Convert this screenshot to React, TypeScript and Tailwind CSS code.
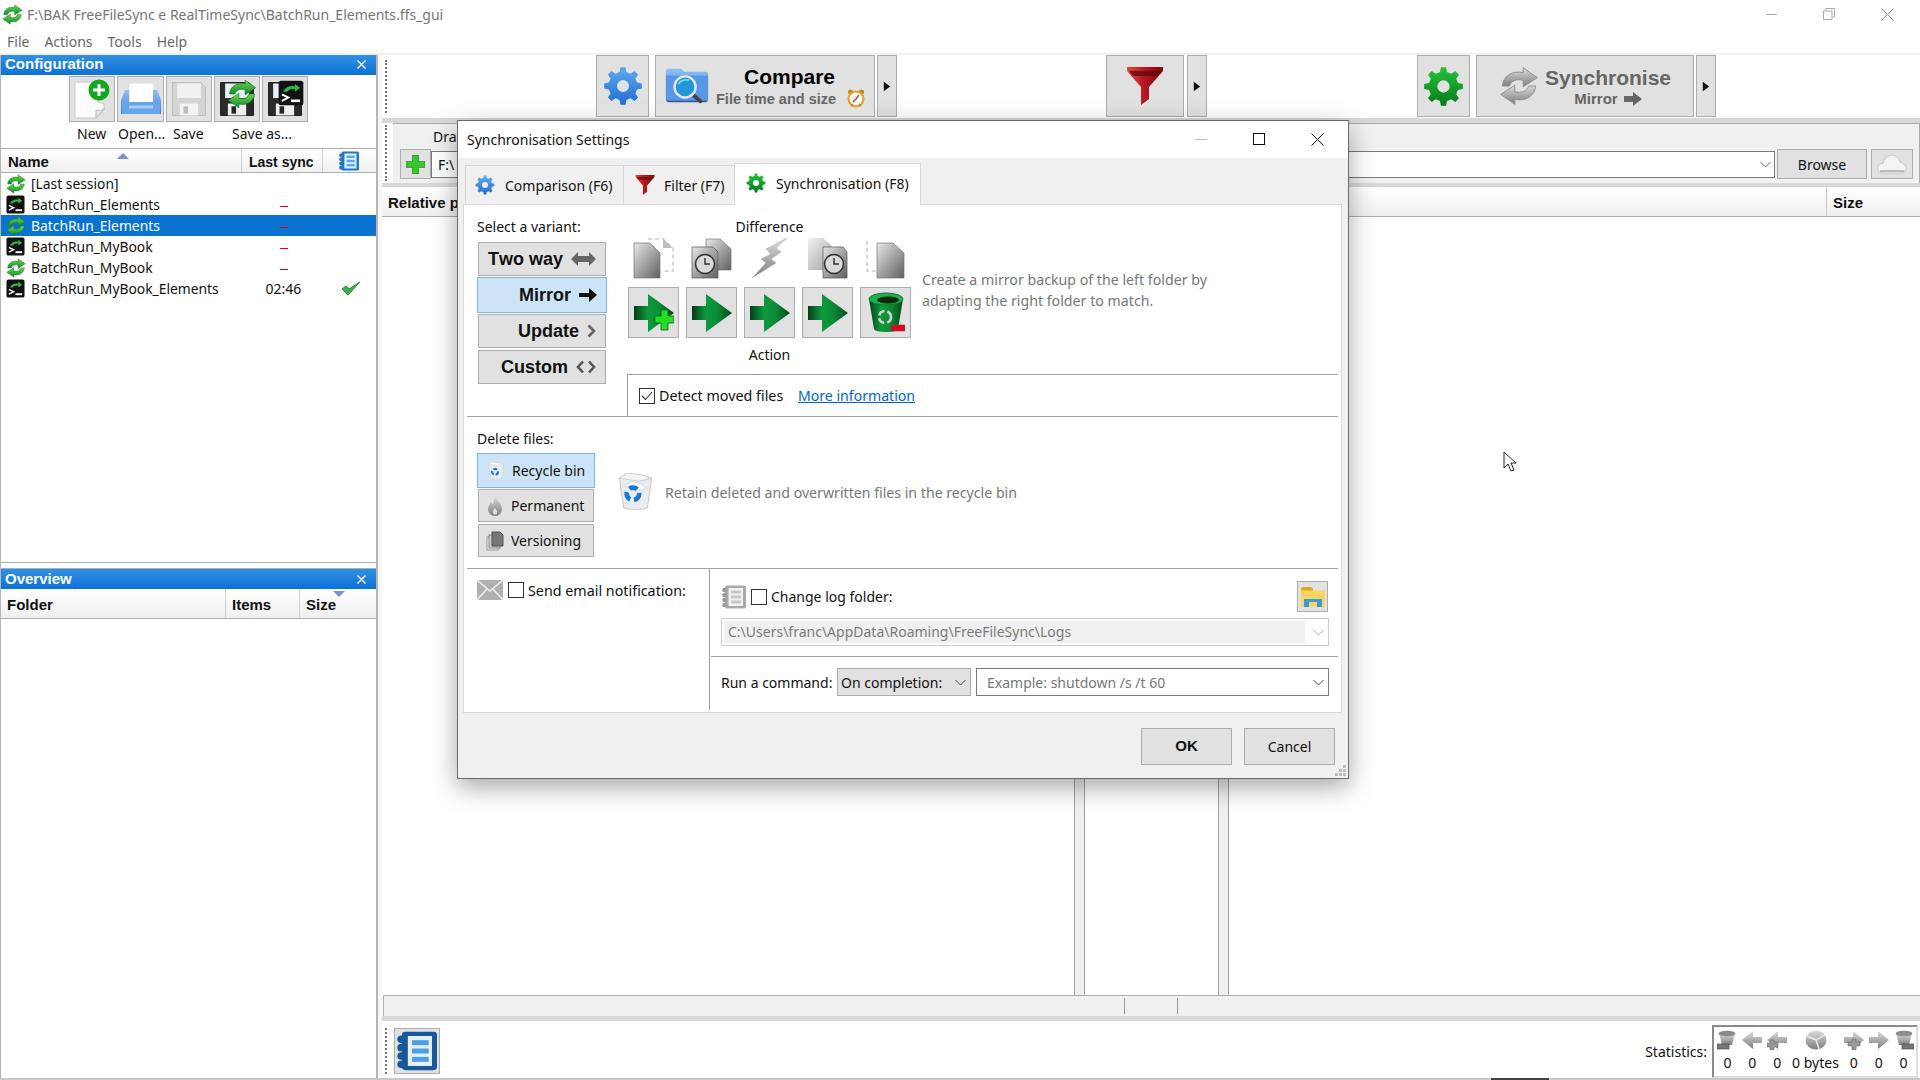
import React from "react";

const gearD = (cx: number, cy: number, ro: number, ri: number, hole: number, n = 8) => {
  let d = "";
  for (let i = 0; i < n; i++) {
    const s = (Math.PI * 2) / n;
    const a = i * s;
    const pts = [
      [ri, a - s * 0.30],
      [ro, a - s * 0.17],
      [ro, a + s * 0.17],
      [ri, a + s * 0.30],
    ];
    pts.forEach(([r, t], j) => {
      d += `${i === 0 && j === 0 ? "M" : "L"}${(cx + r * Math.cos(t)).toFixed(2)} ${(cy + r * Math.sin(t)).toFixed(2)} `;
    });
  }
  d += `Z M${cx + hole} ${cy} A${hole} ${hole} 0 1 0 ${cx - hole} ${cy} A${hole} ${hole} 0 1 0 ${cx + hole} ${cy} Z`;
  return d;
};
const GEAR = gearD(20, 20, 19, 14.5, 6);

const Defs = () => (
  <svg className="absolute w-0 h-0">
    <defs>
      <linearGradient id="gBlue" x1="0" y1="0" x2="0" y2="1"><stop offset="0" stopColor="#5fa8f0" /><stop offset="1" stopColor="#1e6fd0" /></linearGradient>
      <linearGradient id="gGreenG" x1="0" y1="0" x2="0" y2="1"><stop offset="0" stopColor="#27c23a" /><stop offset="1" stopColor="#057a1a" /></linearGradient>
      <linearGradient id="gRed" x1="0" y1="0" x2="1" y2="0"><stop offset="0" stopColor="#e74545" /><stop offset="0.5" stopColor="#b5161c" /><stop offset="1" stopColor="#7a0a10" /></linearGradient>
      <linearGradient id="gArrow" x1="0" y1="0" x2="1" y2="0"><stop offset="0" stopColor="#063d18" /><stop offset="0.35" stopColor="#0c9a3c" /><stop offset="0.65" stopColor="#0a8a35" /><stop offset="1" stopColor="#04481b" /></linearGradient>
      <linearGradient id="gDoc" x1="0" y1="0" x2="1" y2="1"><stop offset="0" stopColor="#e8e8e8" /><stop offset="1" stopColor="#5f5f5f" /></linearGradient>
      <linearGradient id="gSync" x1="0" y1="0" x2="0" y2="1"><stop offset="0" stopColor="#6fd83c" /><stop offset="1" stopColor="#0b8a3a" /></linearGradient>
      <linearGradient id="gGray" x1="0" y1="0" x2="0" y2="1"><stop offset="0" stopColor="#dcdcdc" /><stop offset="1" stopColor="#7d7d7d" /></linearGradient>
      <linearGradient id="gFolder" x1="0" y1="0" x2="0" y2="1"><stop offset="0" stopColor="#8fc0f5" /><stop offset="1" stopColor="#3f7fd6" /></linearGradient>
    </defs>
  </svg>
);

const SyncArrows = ({ fill = "url(#gSync)", size = 20, stroke = "#0a6e30" }: { fill?: string; size?: number; stroke?: string }) => (
  <svg className="shrink-0" width={size} height={size} viewBox="0 0 24 24">
    <path d="M2 12C2.5 6 8 2.5 14.5 4L14.5 1L23 7L14.5 12.5L14.5 8.6C10.5 7.5 7.3 9 6.2 12Z" fill={fill} stroke={stroke} strokeWidth="0.5" />
    <path d="M22 12C21.5 18 16 21.5 9.5 20L9.5 23L1 17L9.5 11.5L9.5 15.4C13.5 16.5 16.7 15 17.8 12Z" fill={fill} stroke={stroke} strokeWidth="0.5" />
  </svg>
);

const TermIcon = ({ size = 20 }: { size?: number }) => (
  <svg className="shrink-0" width={size} height={size} viewBox="0 0 20 20">
    <rect x="0.5" y="0.5" width="19" height="19" rx="2" fill="#111" />
    <path d="M4 9C6 5 10 4 13 5L13 3L17 6L13 9L13 7C10 6.5 8 7.5 7 9Z" fill="#2fb84a" />
    <path d="M3 11L8 13.5L3 16" fill="none" stroke="#fff" strokeWidth="1.5" />
    <path d="M10 16H17" stroke="#fff" strokeWidth="2" />
  </svg>
);

const Floppy = ({ dark = false }: { dark?: boolean }) => (
  <>
    <path d="M5 5H36L41 10V41H5Z" fill={dark ? "#2a2a2a" : "#d4d4d4"} stroke={dark ? "#111" : "#bbb"} />
    <rect x="10" y="6" width="26" height="16" fill={dark ? "#e8eef5" : "#f1f1f1"} />
    <rect x="13" y="28" width="20" height="13" fill={dark ? "#eee" : "#f3f3f3"} />
    <rect x="17" y="31" width="5" height="8" fill={dark ? "#222" : "#bbb"} />
  </>
);

const NewIcon = () => (
  <svg width="40" height="42" viewBox="0 0 40 42">
    <path d="M3 4H26V24L32 26V32L24 40H3Z" fill="#fdfdfd" stroke="#c9c9c9" />
    <path d="M33 30L24 40V32C28 33 31 32 33 30Z" fill="#e6e6e6" stroke="#bbb" />
    <circle cx="27" cy="12" r="10.5" fill="#12a71f" />
    <path d="M27 6V18M21 12H33" stroke="#fff" strokeWidth="3" />
  </svg>
);
const OpenIcon = () => (
  <svg width="42" height="42" viewBox="0 0 42 42">
    <rect x="9" y="5" width="25" height="22" fill="#fff" stroke="#ddd" />
    <path d="M5 12H9V26H33V12H37L41 22V36H1V22Z" fill="url(#gFolder)" />
    <path d="M2 24H40V36H2Z" fill="#68a6ec" />
    <path d="M9 29H33" stroke="#a6cdf5" strokeWidth="3" />
  </svg>
);

const CompareIcon = () => (
  <svg className="shrink-0" width="46" height="42" viewBox="0 0 48 42">
    <path d="M2 6Q2 3 5 3H18L21 6H43Q46 6 46 9V36H2Z" fill="url(#gFolder)" />
    <path d="M2 10H46V36H2Z" fill="#5b96e6" />
    <path d="M2 36H46L44 38H4Z" fill="#2d5fa8" />
    <path d="M28 28L38 37" stroke="#444" strokeWidth="4" strokeLinecap="round" />
    <circle cx="22" cy="22" r="11" fill="#1f9ad6" stroke="#e8e8e8" strokeWidth="2.5" />
    <path d="M15 19C17 15 22 14 26 15" stroke="#7fd0f5" strokeWidth="2" fill="none" />
  </svg>
);
const AlarmIcon = () => (
  <svg width="18" height="20" viewBox="0 0 18 20">
    <circle cx="3.5" cy="4" r="2.5" fill="#b98a2a" /><circle cx="14.5" cy="4" r="2.5" fill="#b98a2a" />
    <circle cx="9" cy="11" r="7.5" fill="#fff" stroke="#eda11c" strokeWidth="2" />
    <path d="M9 11L12 7M9 11L6 14" stroke="#d8382c" strokeWidth="1.3" />
    <path d="M4 18L6 16M14 18L12 16" stroke="#b98a2a" strokeWidth="1.5" />
  </svg>
);
const Funnel = ({ size = 38 }: { size?: number }) => (
  <svg className="shrink-0" width={size} height={size} viewBox="0 0 38 38">
    <path d="M1 0H37V4L23 20V32L15 38V20L1 4Z" fill="url(#gRed)" />
    <path d="M3 4H35L31 9H7Z" fill="#5a0a0e" opacity="0.75" />
  </svg>
);
const Gear = ({ fill, size }: { fill: string; size: number }) => (
  <svg className="shrink-0" width={size} height={size} viewBox="0 0 40 40"><path d={GEAR} fill={fill} fillRule="evenodd" /></svg>
);
const RightArrow = ({ w = 10, h = 12, c = "#111" }: { w?: number; h?: number; c?: string }) => (
  <svg width={w} height={h} viewBox="0 0 10 12"><path d="M1 0L9 6L1 12Z" fill={c} /></svg>
);
const Chevron = ({ c = "#444" }: { c?: string }) => (
  <svg className="shrink-0" width="11" height="7" viewBox="0 0 11 7"><path d="M0.5 1L5.5 6L10.5 1" fill="none" stroke={c} strokeWidth="1" /></svg>
);

const GreenArrow = () => (
  <svg width="40" height="38" viewBox="0 0 40 38">
    <path d="M0 12H14V0L40 19L14 38V26H0Z" fill="url(#gArrow)" />
  </svg>
);
const Clock = ({ cx, cy }: { cx: number; cy: number }) => (
  <g>
    <circle cx={cx} cy={cy} r="9.5" fill="#d9d9d9" stroke="#333" strokeWidth="1.6" />
    <path d={`M${cx} ${cy - 6}V${cy}H${cx + 5}`} fill="none" stroke="#333" strokeWidth="1.5" />
  </g>
);
const DiffLeftOnly = () => (
  <svg width="42" height="42" viewBox="0 0 42 42">
    <path d="M15 1H30L40 10V33H28" fill="none" stroke="#ccc" strokeWidth="1.6" strokeDasharray="4 3" />
    <path d="M30 1L40 10H30Z" fill="#bdbdbd" />
    <path d="M1 5H17L27 15V40H1Z" fill="url(#gDoc)" stroke="#777" strokeWidth="0.7" />
  </svg>
);
const DiffLeftNew = () => (
  <svg width="42" height="42" viewBox="0 0 42 42">
    <path d="M15 1H29L40 11V32H15Z" fill="url(#gDoc)" stroke="#777" strokeWidth="0.7" />
    <path d="M1 9H22L27 14V40H1Z" fill="url(#gDoc)" stroke="#555" strokeWidth="0.7" />
    <Clock cx={14} cy={26} />
  </svg>
);
const DiffBolt = () => (
  <svg width="36" height="40" viewBox="0 0 36 40">
    <path d="M35 0L14 11L19 16L9 21L14 25L0 40L24 25L19 21L29 14L24 10Z" fill="url(#gGray)" stroke="#aaa" strokeWidth="0.5" />
  </svg>
);
const DiffRightNew = () => (
  <svg width="42" height="42" viewBox="0 0 42 42">
    <path d="M1 0H16L27 10V32H1Z" fill="url(#gDoc)" opacity="0.6" />
    <path d="M16 9H36L40 14V40H16Z" fill="url(#gDoc)" stroke="#555" strokeWidth="0.7" />
    <Clock cx={27} cy={26} />
  </svg>
);
const DiffRightOnly = () => (
  <svg width="42" height="42" viewBox="0 0 42 42">
    <path d="M2 3V33H12" fill="none" stroke="#ccc" strokeWidth="1.6" strokeDasharray="4 3" />
    <path d="M12 5H28L39 15V40H12Z" fill="url(#gDoc)" stroke="#777" strokeWidth="0.7" />
  </svg>
);
const GreenBin = () => (
  <svg width="38" height="42" viewBox="0 0 38 42">
    <path d="M2 7L7 37Q8 40 19 40Q30 40 31 37L36 7Z" fill="url(#gArrow)" />
    <ellipse cx="19" cy="7" rx="17" ry="6" fill="#22b04a" stroke="#0a7a30" />
    <ellipse cx="21" cy="8" rx="11" ry="3.5" fill="#0a2a12" />
    <circle cx="18" cy="25" r="6" fill="none" stroke="#cfcfcf" strokeWidth="2.6" strokeDasharray="7 3" />
    <rect x="24" y="33" width="14" height="6" fill="#e8001a" stroke="#555" strokeWidth="0.6" />
  </svg>
);
const PlusArrow = () => (
  <svg width="40" height="38" viewBox="0 0 40 38">
    <path d="M0 12H14V0L40 19L14 38V26H0Z" fill="url(#gArrow)" />
    <path d="M27 16H34V22H40V29H34V36H27V29H21V22H27Z" fill="#22e01f" stroke="#0a5a12" strokeWidth="0.8" />
  </svg>
);
const Bin = ({ size = 16 }: { size?: number }) => (
  <svg className="shrink-0" width={size} height={size * 1.1} viewBox="0 0 32 36">
    <path d="M1 5L5 33Q6 35 16 35Q26 35 28 33L32 5Z" fill="#e9edf0" stroke="#c9c9c9" />
    <path d="M1 5L8 0L24 2L32 5L20 8Z" fill="#f5f5f5" stroke="#cfcfcf" />
    <path d="M6 12L13 8L24 11L27 15L17 18Z" fill="#f8f8f8" stroke="#dedede" />
    <circle cx="14" cy="20" r="6" fill="none" stroke="#1379d6" strokeWidth="4.5" strokeDasharray="8 4" />
  </svg>
);
const Flame = () => (
  <svg className="shrink-0" width="16" height="20" viewBox="0 0 16 20">
    <path d="M8 0C9 4 15 7 15 13C15 17 12 20 8 20C4 20 1 17 1 13C1 10 3 8 4 6C5 8 6 8 6 8C7 5 7 3 8 0Z" fill="url(#gGray)" />
    <path d="M8 12C9 14 11 15 10 17C9 19 7 19 6 17C5 15 7 14 8 12Z" fill="#ddd" />
  </svg>
);
const Stack = () => (
  <svg className="shrink-0" width="18" height="20" viewBox="0 0 18 20">
    <rect x="1" y="6" width="11" height="13" fill="#eee" stroke="#999" />
    <rect x="3" y="4" width="11" height="13" fill="#ccc" stroke="#888" />
    <path d="M6 1H14L17 4V15H6Z" fill="#777" stroke="#555" />
  </svg>
);
const Envelope = () => (
  <svg className="shrink-0" width="26" height="20" viewBox="0 0 26 20">
    <rect width="26" height="20" fill="#b0b0b0" />
    <path d="M0 0L13 11L26 0M0 20L10 9M26 20L16 9" stroke="#eee" strokeWidth="1.6" fill="none" />
  </svg>
);
const Notebook = ({ size = 24, main = "#a9a9a9", inner = "#f0f0f0", bar = "#c8c8c8", dot = "#999" }: { size?: number; main?: string; inner?: string; bar?: string; dot?: string }) => (
  <svg className="shrink-0" width={size} height={size} viewBox="0 0 24 24">
    <rect x="3" y="0.5" width="21" height="23" rx="2" fill={main} />
    <rect x="6.5" y="3" width="14.5" height="18" fill={inner} />
    <rect x="9" y="5.5" width="10" height="3" fill={bar} /><rect x="9" y="10.5" width="10" height="3" fill={bar} /><rect x="9" y="15.5" width="10" height="3" fill={bar} />
    <circle cx="2.5" cy="5" r="2.3" fill={dot} /><circle cx="2.5" cy="10" r="2.3" fill={dot} /><circle cx="2.5" cy="15" r="2.3" fill={dot} /><circle cx="2.5" cy="20" r="2.3" fill={dot} />
  </svg>
);
const WinFolder = () => (
  <svg width="24" height="20" viewBox="0 0 24 20">
    <path d="M0 2Q0 0 2 0H10L12 2V5H0Z" fill="#e0a522" />
    <rect y="3.5" width="24" height="16.5" fill="#fcd561" />
    <path d="M3 20V12H21V20H16V15H8V20Z" fill="#3d97dc" />
  </svg>
);
const Cloud = () => (
  <svg width="28" height="22" viewBox="0 0 28 22">
    <path d="M5 20Q0 20 0 15Q0 11 5 10Q6 4 13 2Q20 2 22 9Q28 11 28 16Q27 20 23 20Z" fill="#f4f4f4" stroke="#c8c8c8" />
    <path d="M2 18H26" stroke="#bbb" strokeWidth="2" />
  </svg>
);
const Grip = () => (
  <div className="w-[3px] h-full border-l-2 border-dotted border-[#777]" />
);

const StatBin = ({ flip = false }: { flip?: boolean }) => (
  <svg width="20" height="20" viewBox="0 0 20 20">
    <path d="M2 3L5 15H15L18 3Z" fill="url(#gGray)" />
    <ellipse cx="10" cy="3.5" rx="8.5" ry="2.8" fill="#8a8a8a" />
    <rect x={flip ? 8 : 0} y="14" width="12" height="5" fill="#777" stroke="#444" strokeWidth="0.6" />
  </svg>
);
const StatArrow = ({ left = false, plus = false }: { left?: boolean; plus?: boolean }) => (
  <svg width="20" height="20" viewBox="0 0 20 20">
    <path transform={left ? "translate(20 0) scale(-1 1)" : undefined} d="M0 7H9V1L20 10L9 19V13H0Z" fill="url(#gGray)" />
    {plus && <path d={left ? "M3 10H7V13H11V17H7V20H3V17H0V13H3Z" : "M8 9H12V12H16V16H12V20H8V16H4V12H8Z"} fill="#9a9a9a" stroke="#555" strokeWidth="0.5" />}
  </svg>
);
const StatPie = () => (
  <svg width="22" height="20" viewBox="0 0 22 20">
    <ellipse cx="11" cy="10" rx="10.5" ry="9.5" fill="url(#gGray)" />
    <path d="M11 10L2 6M11 10L20 5M11 10L14 19" stroke="#eee" strokeWidth="1.4" />
  </svg>
);

const btn = "bg-[#e1e1e1] border border-[#adadad] flex items-center justify-center";
const sans = "[font-family:'Liberation_Sans',Arial,sans-serif]";

const rows = [
  { t: "sync", n: "[Last session]", s: "", sel: false },
  { t: "term", n: "BatchRun_Elements", s: "-", sel: false },
  { t: "sync", n: "BatchRun_Elements", s: "-", sel: true },
  { t: "term", n: "BatchRun_MyBook", s: "-", sel: false },
  { t: "sync", n: "BatchRun_MyBook", s: "-", sel: false },
  { t: "term", n: "BatchRun_MyBook_Elements", s: "02:46", sel: false },
];

const PanelHead = ({ title, cls }: { title: string; cls: string }) => (
  <div className={`h-[20px] shrink-0 bg-gradient-to-b from-[#2f90e2] to-[#0a72d6] flex items-center justify-between pl-[4px] pr-[10px] text-white text-[15px] font-bold ${cls} ${sans}`}>
    <span>{title}</span>
    <svg width="9" height="9" viewBox="0 0 9 9"><path d="M0.5 0.5L8.5 8.5M8.5 0.5L0.5 8.5" stroke="#fff" strokeWidth="1.3" /></svg>
  </div>
);

const CheckBox = ({ on = false }: { on?: boolean }) => (
  <span className="w-[16px] h-[16px] shrink-0 border border-[#333] bg-white flex items-center justify-center">
    {on && <svg width="12" height="10" viewBox="0 0 12 10"><path d="M1 5L4.5 8.5L11 1" fill="none" stroke="#333" strokeWidth="1.1" /></svg>}
  </span>
);

const Variant = ({ label, on, icon, cls }: { label: string; on?: boolean; icon: React.ReactNode; cls: string }) => (
  <div className={`${cls} flex items-center justify-end pr-[9px] gap-[8px] border text-[18px] font-bold text-[#111] [font-kerning:none] ${sans} ${on ? "bg-[#cce4f7] border-[#7cb5ec]" : "bg-[#e1e1e1] border-[#adadad]"}`}>
    <span>{label}</span>{icon}
  </div>
);

export default function App() {
  return (
    <div className="relative w-[1920px] h-[1080px] overflow-hidden bg-white flex flex-col text-[14px] text-[#111] [font-family:'Noto_Sans',sans-serif]">
      <Defs />
      {/* Title bar */}
      <div className="h-[28px] shrink-0 flex items-center pl-[2px] text-[#767676]">
        <SyncArrows size={21} />
        <span className="ml-[4px]">F:\BAK FreeFileSync e RealTimeSync\BatchRun_Elements.ffs_gui</span>
        <div className="ml-auto flex items-center h-full pr-[4px]">
          <div className="w-[58px] flex justify-center"><svg width="11" height="1" viewBox="0 0 11 1"><path d="M0 .5H11" stroke="#aaa" /></svg></div>
          <div className="w-[58px] flex justify-center"><svg width="12" height="12" viewBox="0 0 12 12"><path d="M3 2.5V.5H11.5V9H9.5M.5 3H9V11.5H.5Z" fill="none" stroke="#aaa" /></svg></div>
          <div className="w-[58px] flex justify-center"><svg width="13" height="13" viewBox="0 0 13 13"><path d="M.5 .5L12.5 12.5M12.5 .5L.5 12.5" stroke="#888" /></svg></div>
        </div>
      </div>
      {/* Menu */}
      <div className="h-[25px] shrink-0 flex items-center pl-[7px] pt-[2px] gap-[15px] text-[#666]">
        <span>File</span><span>Actions</span><span>Tools</span><span>Help</span>
      </div>
      <div className="h-[2px] shrink-0 bg-[#f0f0f0]" />

      {/* Main */}
      <div className="flex flex-1 min-h-0">
        {/* Left pane */}
        <div className="w-[378px] shrink-0 flex flex-col border-l border-r-2 border-[#b5b5b5]">
          <PanelHead title="Configuration" cls="pb-[2px]" />
          <div className="h-[74px] shrink-0 border-b border-[#adadad] flex flex-col">
            <div className="flex pl-[68px] gap-[2px] pt-[1px] h-[47px]">
              <div className={`${btn} w-[46px] h-[46px]`}><NewIcon /></div>
              <div className={`${btn} w-[47px] h-[46px]`}><OpenIcon /></div>
              <div className={`${btn} w-[46px] h-[46px]`}><svg width="42" height="42" viewBox="0 0 46 46"><Floppy /></svg></div>
              <div className={`${btn} w-[46px] h-[46px] relative`}>
                <svg width="42" height="42" viewBox="0 0 46 46"><Floppy dark /></svg>
                <div className="absolute right-[2px] top-[2px]"><SyncArrows size={30} /></div>
              </div>
              <div className={`${btn} w-[46px] h-[46px] relative`}>
                <svg width="42" height="42" viewBox="0 0 46 46"><Floppy dark /></svg>
                <div className="absolute right-[3px] top-[3px]"><TermIcon size={26} /></div>
              </div>
            </div>
            <div className="flex h-[22px] items-center text-[14px] text-[#111]">
              <span className="ml-[76px] w-[41px]">New</span>
              <span className="w-[55px]">Open...</span>
              <span className="w-[59px]">Save</span>
              <span>Save as...</span>
            </div>
          </div>
          <div className={`h-[24px] shrink-0 flex border-b border-[#adadad] bg-gradient-to-b from-[#ffffff] to-[#f0f0f0] text-[15px] font-bold ${sans} relative`}>
            <div className="w-[241px] border-r border-[#d0d0d0] pl-[7px] pt-[3px] flex items-center">Name</div>
            <div className="w-[81px] border-r border-[#d0d0d0] pl-[7px] pt-[3px] flex items-center text-[14px] whitespace-nowrap">Last sync</div>
            <div className="flex-1 flex items-center pl-[16px]"><Notebook size={20} main="#1f79c9" bar="#5da9ea" dot="#1f79c9" inner="#e8f2fb" /></div>
            <svg className="absolute left-[116px] top-[4px]" width="12" height="6" viewBox="0 0 12 6"><path d="M6 0L12 6H0Z" fill="#7f8fd6" /></svg>
          </div>
          <div className="h-[390px] shrink-0 border-b border-[#adadad]">
            {rows.map((r, i) => (
              <div key={i} className={`h-[21px] flex items-center ${r.sel ? "bg-[#0a72d0] text-white" : ""}`}>
                <div className="w-[30px] pl-[5px] flex items-center">{r.t === "sync" ? <SyncArrows size={20} /> : <TermIcon size={19} />}</div>
                <div className="w-[212px] whitespace-nowrap text-[13.85px] pt-[1px]">{r.n}</div>
                <div className="w-[81px] text-center">
                  {r.s === "-" ? <span className="inline-block w-[8px] h-[1.5px] bg-[#e00000] align-middle" /> : <span>{r.s}</span>}
                </div>
                {r.s === "02:46" && (
                  <svg className="ml-[17px]" width="20" height="17" viewBox="0 0 20 17"><path d="M1 9L7 15L19 2L8 9L5 6Z" fill="#3cb04a" stroke="#2a8a3a" strokeWidth="1" /></svg>
                )}
              </div>
            ))}
          </div>
          <div className="h-[5px] shrink-0" />
          <div className="border-t border-[#adadad]"><PanelHead title="Overview" cls="pb-[0px]" /></div>
          <div className={`h-[30px] shrink-0 flex border-b border-[#adadad] bg-gradient-to-b from-[#ffffff] to-[#f0f0f0] text-[15px] font-bold ${sans} relative`}>
            <div className="w-[225px] border-r border-[#d0d0d0] pl-[6px] pt-[4px] flex items-center">Folder</div>
            <div className="w-[74px] border-r border-[#d0d0d0] pl-[6px] pt-[4px] flex items-center">Items</div>
            <div className="flex-1 pl-[6px] pt-[4px] flex items-center">Size</div>
            <svg className="absolute left-[332px] top-[2px]" width="12" height="6" viewBox="0 0 12 6"><path d="M0 0H12L6 6Z" fill="#7f8fd6" /></svg>
          </div>
          <div className="flex-1" />
        </div>
        <div className="w-[4px] shrink-0 bg-[#f6f6f6]" />

        {/* Right pane */}
        <div className="flex-1 min-w-0 flex flex-col">
          <div className="h-[63px] shrink-0 flex items-start">
            <div className="w-[214px] h-[53px] mt-[5px] pl-[3px]"><Grip /></div>
            <div className={`${btn} w-[53px] h-[62px] bg-gradient-to-b from-[#e1e1e1] from-80% to-[#f0f0f0]`}><Gear fill="url(#gBlue)" size={40} /></div>
            <div className={`${btn} w-[220px] h-[62px] ml-[6px] bg-gradient-to-b from-[#e1e1e1] from-80% to-[#f0f0f0] justify-start pl-[8px] relative`}>
              <CompareIcon />
              <div className={`ml-[6px] flex flex-col items-center ${sans} font-bold leading-none`}>
                <span className="text-[21px] text-black pl-[27px]">Compare</span>
                <span className="text-[14.5px] text-[#666] mt-[5px] whitespace-nowrap">File time and size</span>
              </div>
              <div className="absolute right-[9px] bottom-[8px]"><AlarmIcon /></div>
            </div>
            <div className={`${btn} w-[20px] h-[62px] ml-[2px]`}><RightArrow w={8} h={13} /></div>
            <div className={`${btn} w-[78px] h-[62px] ml-[209px]`}><Funnel size={38} /></div>
            <div className={`${btn} w-[20px] h-[62px] ml-[3px]`}><RightArrow w={8} h={13} /></div>
            <div className={`${btn} w-[53px] h-[62px] ml-[210px]`}><Gear fill="url(#gGreenG)" size={41} /></div>
            <div className={`${btn} w-[218px] h-[62px] ml-[6px] justify-start pl-[22px]`}>
              <SyncArrows size={40} fill="url(#gGray)" stroke="#888" />
              <div className={`ml-[6px] mt-[1px] flex flex-col items-center ${sans} font-bold leading-none text-[#666]`}>
                <span className="text-[21px]">Synchronise</span>
                <span className="text-[15px] mt-[3px] flex items-center gap-[6px]">Mirror
                  <svg width="18" height="14" viewBox="0 0 18 14"><path d="M0 4H9V0L18 7L9 14V10H0Z" fill="#666" /></svg>
                </span>
              </div>
            </div>
            <div className={`${btn} w-[20px] h-[62px] ml-[2px]`}><RightArrow w={8} h={13} /></div>
          </div>
          <div className="h-[5px] shrink-0 bg-[#d8d8d8]" />
          {/* Folder row */}
          <div className="h-[60px] shrink-0 flex">
            <div className="w-[11px] pl-[3px] py-[2px]"><Grip /></div>
            <div className="flex-1 bg-[#f0f0f0] border-t border-r border-[#adadad] flex flex-col pl-[7px]">
              <div className="h-[25px] pl-[33px] flex items-center">Dra</div>
              <div className="flex items-center">
                <div className={`${btn} w-[31px] h-[30px]`}>
                  <svg width="19" height="19" viewBox="0 0 19 19"><path d="M6.5 0H12.5V6.5H19V12.5H12.5V19H6.5V12.5H0V6.5H6.5Z" fill="#3ac42e" stroke="#16801a" strokeWidth="0.6" /></svg>
                </div>
                <div className="w-[1344px] h-[27px] bg-white border border-[#7a7a7a] flex items-center pl-[6px] pr-[3px] justify-between">
                  <span>F:\</span><Chevron c="#666" />
                </div>
                <div className={`${btn} w-[90px] h-[30px] ml-[2px]`}>Browse</div>
                <div className={`${btn} w-[42px] h-[30px] ml-[4px]`}><Cloud /></div>
              </div>
            </div>
          </div>
          <div className="h-[4px] shrink-0 bg-[#d8d8d8]" />
          <div className={`h-[30px] shrink-0 flex border-b border-[#adadad] bg-gradient-to-b from-[#ffffff] to-[#f0f0f0] text-[15px] font-bold ${sans}`}>
            <div className="w-[1444px] pl-[6px] pt-[3px] flex items-center">Relative p</div>
            <div className="flex-1 border-l border-[#c8c8c8] pl-[6px] pt-[3px] flex items-center">Size</div>
          </div>
          {/* Grid */}
          <div className="flex-1 min-h-0 flex">
            <div className="w-[692px]" />
            <div className="w-[11px] border-x border-[#a0a0a0] bg-[#f0f0f0]" />
            <div className="w-[133px]" />
            <div className="w-[11px] border-x border-[#a0a0a0] bg-[#f0f0f0]" />
          </div>
          {/* Status */}
          <div className="h-[21px] shrink-0 ml-[1px] bg-[#f0f0f0] border-t border-l border-[#adadad] flex py-[2px]">
            <div className="w-[740px]" />
            <div className="w-[54px] border-x border-[#999]" />
          </div>
          <div className="h-[5px] shrink-0 bg-[#d8d8d8]" />
          {/* Bottom toolbar */}
          <div className="h-[57px] shrink-0 flex items-start">
            <div className="w-[12px] h-[46px] mt-[7px] pl-[3px]"><Grip /></div>
            <div className={`${btn} w-[46px] h-[46px] mt-[7px]`}><Notebook size={40} main="#17599a" inner="#e8eef5" bar="#49a0e8" dot="#17599a" /></div>
            <div className="ml-auto flex items-center h-full pr-[2px]">
              <span className="mr-[5px] mt-[4px]">Statistics:</span>
              <div className="mt-[3px] w-[206px] h-[53px] border-2 border-t-2 border-[#8a8a8a] border-r-[#ddd] border-b-[#ddd] flex pl-[1px] pt-[3px] leading-[20px]">
                <div className="w-[25px] flex flex-col items-center gap-[3px]"><StatBin /><span>0</span></div>
                <div className="w-[25px] flex flex-col items-center gap-[3px]"><StatArrow left /><span>0</span></div>
                <div className="w-[25px] flex flex-col items-center gap-[3px]"><StatArrow left plus /><span>0</span></div>
                <div className="w-[52px] flex flex-col items-center gap-[3px] whitespace-nowrap"><StatPie /><span>0 bytes</span></div>
                <div className="w-[25px] flex flex-col items-center gap-[3px]"><StatArrow plus /><span>0</span></div>
                <div className="w-[25px] flex flex-col items-center gap-[3px]"><StatArrow /><span>0</span></div>
                <div className="w-[25px] flex flex-col items-center gap-[3px]"><StatBin flip /><span>0</span></div>
              </div>
            </div>
          </div>
        </div>
      </div>
      <div className="h-[2px] shrink-0 bg-[#c8c8c8] flex">
        <div className="ml-[1491px] w-[58px] bg-[#444]" />
      </div>

      {/* Cursor */}
      <svg className="absolute left-[1503px] top-[451px]" width="15" height="22" viewBox="0 0 15 22">
        <path d="M1 1V17L5 13L8 20L11 19L8 12H13Z" fill="#fff" stroke="#222" strokeWidth="1" />
      </svg>

      {/* Dialog */}
      <div className="absolute left-[457px] top-[120px] w-[892px] h-[659px] border border-[#6b6b6b] bg-[#f0f0f0] flex flex-col shadow-[0_8px_24px_rgba(0,0,0,0.35)]">
        <div className="h-[37px] shrink-0 bg-white flex items-center pl-[9px]">
          <span>Synchronisation Settings</span>
          <div className="ml-auto flex items-center h-full pr-[2px] pb-[1px]">
            <div className="w-[58px] flex justify-center"><svg width="12" height="1" viewBox="0 0 12 1"><path d="M0 .5H12" stroke="#bbb" /></svg></div>
            <div className="w-[58px] flex justify-center"><svg width="12" height="12" viewBox="0 0 12 12"><rect x=".5" y=".5" width="11" height="11" fill="none" stroke="#111" /></svg></div>
            <div className="w-[58px] flex justify-center"><svg width="13" height="13" viewBox="0 0 13 13"><path d="M.5 .5L12.5 12.5M12.5 .5L.5 12.5" stroke="#111" /></svg></div>
          </div>
        </div>
        <div className="h-[46px] shrink-0 pl-[7px] flex items-end">
          <div className="w-[158px] h-[39px] border-l border-t border-[#d9d9d9] flex items-center pl-[9px] gap-[10px]"><Gear fill="url(#gBlue)" size={20} /><span>Comparison (F6)</span></div>
          <div className="w-[111px] h-[39px] border-l border-t border-[#d9d9d9] flex items-center pl-[11px] gap-[9px]"><Funnel size={20} /><span>Filter (F7)</span></div>
          <div className="w-[187px] h-[42px] -mb-px relative z-10 bg-white border-x border-t border-[#d9d9d9] flex items-center pl-[11px] gap-[10px] pb-[3px]"><Gear fill="url(#gGreenG)" size={20} /><span className="whitespace-nowrap">Synchronisation (F8)</span></div>
        </div>
        <div className="ml-[5px] w-[879px] h-[509px] shrink-0 bg-white border border-[#d9d9d9] px-[3px] flex flex-col">
          {/* Top block */}
          <div className="h-[212px] shrink-0 flex border-b border-[#a0a0a0]">
            <div className="w-[160px] shrink-0 pl-[10px]">
              <div className="h-[37px] pt-[11px] leading-[22px]">Select a variant:</div>
              <Variant cls="w-[128px] h-[34px] ml-[1px]" label="Two way" icon={<svg width="25" height="14" viewBox="0 0 25 14"><path d="M0 7L7 0V4H18V0L25 7L18 14V10H7V14Z" fill="#666" /></svg>} />
              <Variant cls="w-[130px] h-[36px] mt-[1px]" on label="Mirror" icon={<svg width="18" height="14" viewBox="0 0 18 14"><path d="M0 5H10V0L18 7L10 14V9H0Z" fill="#111" /></svg>} />
              <Variant cls="w-[128px] h-[34px] ml-[1px] mt-[1px]" label="Update" icon={<svg width="9" height="14" viewBox="0 0 9 14"><path d="M1.5 1.5L7 7L1.5 12.5" fill="none" stroke="#666" strokeWidth="2.6" /></svg>} />
              <Variant cls="w-[128px] h-[34px] ml-[1px] mt-[2px]" label="Custom" icon={<svg width="20" height="14" viewBox="0 0 20 14"><path d="M7 1.5L2 7L7 12.5M13 1.5L18 7L13 12.5" fill="none" stroke="#555" strokeWidth="2.6" /></svg>} />
            </div>
            <div className="flex-1 flex flex-col relative">
              <div className="h-[169px] shrink-0 flex">
                <div className="w-[284px] pl-px shrink-0">
                  <div className="h-[33px] pt-[11px] leading-[22px] text-center">Difference</div>
                  <div className="h-[49px] flex gap-[7px]">
                    {[<DiffLeftOnly key="a" />, <DiffLeftNew key="b" />, <DiffBolt key="c" />, <DiffRightNew key="d" />, <DiffRightOnly key="e" />].map((ic, i) => (
                      <div key={i} className="w-[51px] flex justify-center items-start">{ic}</div>
                    ))}
                  </div>
                  <div className="h-[51px] flex gap-[7px]">
                    <div className={`${btn} w-[51px] h-[51px]`}><PlusArrow /></div>
                    <div className={`${btn} w-[51px] h-[51px]`}><GreenArrow /></div>
                    <div className={`${btn} w-[51px] h-[51px]`}><GreenArrow /></div>
                    <div className={`${btn} w-[51px] h-[51px]`}><GreenArrow /></div>
                    <div className={`${btn} w-[51px] h-[51px]`}><GreenBin /></div>
                  </div>
                  <div className="mt-[6px] leading-[22px] text-center">Action</div>
                </div>
                <div className="ml-[11px] mt-[64px] w-[400px] text-[#777] leading-[21px] text-[14.2px]">Create a mirror backup of the left folder by<br />adapting the right folder to match.</div>
              </div>
              <div className="flex-1 border-t border-l border-[#a0a0a0] flex items-center pl-[11px]">
                <CheckBox on />
                <span className="ml-[4px] text-[14.3px] whitespace-nowrap w-[139px] mt-[1px]">Detect moved files</span>
                <span className="text-[#0066cc] underline text-[14.1px] mt-[1px]">More information</span>
              </div>
            </div>
          </div>
          {/* Delete block */}
          <div className="h-[152px] shrink-0 border-b border-[#a0a0a0] pl-[10px]">
            <div className="h-[36px] pt-[11px] leading-[22px]">Delete files:</div>
            <div className="flex">
              <div className="w-[118px] shrink-0 flex flex-col">
                <div className="w-[118px] h-[35px] bg-[#cce4f7] border border-[#7cb5ec] flex items-center pl-[10px] gap-[8px]"><Bin size={16} /><span>Recycle bin</span></div>
                <div className="w-[116px] h-[33px] ml-[1px] mt-[1px] bg-[#e1e1e1] border border-[#adadad] flex items-center pl-[8px] gap-[8px]"><Flame /><span>Permanent</span></div>
                <div className="w-[116px] h-[33px] ml-[1px] mt-[2px] bg-[#e1e1e1] border border-[#adadad] flex items-center pl-[7px] gap-[7px]"><Stack /><span>Versioning</span></div>
              </div>
              <div className="ml-[23px] mt-[20px] h-[38px] flex items-center">
                <Bin size={34} />
                <span className="ml-[13px] mt-[1px] text-[#777] text-[14.15px] whitespace-nowrap">Retain deleted and overwritten files in the recycle bin</span>
              </div>
            </div>
          </div>
          {/* Notification block */}
          <div className="h-[141px] shrink-0 flex">
            <div className="w-[243px] shrink-0 border-r border-[#a0a0a0] pl-[10px] pt-[11px] flex items-start">
              <Envelope />
              <span className="ml-[5px] mt-[2px]"><CheckBox /></span>
              <span className="ml-[4px] leading-[22px] text-[14.3px] whitespace-nowrap">Send email notification:</span>
            </div>
            <div className="flex-1 flex flex-col">
              <div className="h-[88px] shrink-0 ml-px border-b border-[#a0a0a0] pl-[10px] pt-[12px]">
                <div className="h-[31px] w-[608px] flex items-center pl-[1px]">
                  <Notebook size={24} />
                  <span className="ml-[5px]"><CheckBox /></span>
                  <span className="ml-[4px]">Change log folder:</span>
                  <div className={`${btn} w-[31px] h-[31px] ml-auto mr-px`}><WinFolder /></div>
                </div>
                <div className="mt-[6px] w-[608px] h-[28px] border border-[#cccccc] flex items-center pl-[2px] pr-[4px]">
                  <div className="w-[581px] h-[22px] bg-[#f0f0f0] text-[#7a7a7a] pl-[4px] leading-[22px]">C:\Users\franc\AppData\Roaming\FreeFileSync\Logs</div>
                  <div className="ml-auto flex"><Chevron c="#aaa" /></div>
                </div>
              </div>
              <div className="pl-[11px] pt-[11px] flex items-center">
                <span className="w-[116px] whitespace-nowrap">Run a command:</span>
                <div className="w-[134px] h-[28px] bg-[#e1e1e1] border border-[#adadad] flex items-center justify-between pl-[3px] pr-[4px]"><span className="whitespace-nowrap">On completion:</span><Chevron /></div>
                <div className="w-[353px] h-[28px] ml-[5px] border border-[#7a7a7a] flex items-center justify-between pl-[10px] pr-[4px] text-[#777]"><span>Example: shutdown /s /t 60</span><Chevron /></div>
              </div>
            </div>
          </div>
        </div>
        <div className="mt-[15px] flex justify-end gap-[12px] pr-[13px]">
          <div className={`${btn} w-[91px] h-[37px] font-bold text-[15px] ${sans}`}>OK</div>
          <div className={`${btn} w-[91px] h-[37px]`}>Cancel</div>
        </div>
        <svg className="absolute right-[1px] bottom-[1px]" width="12" height="12" viewBox="0 0 12 12">
          <path d="M8 0h3v3H8zM4 4h3v3H4zM8 4h3v3H8zM0 8h3v3H0zM4 8h3v3H4zM8 8h3v3H8z" fill="#bdbdbd" />
        </svg>
      </div>
    </div>
  );
}
